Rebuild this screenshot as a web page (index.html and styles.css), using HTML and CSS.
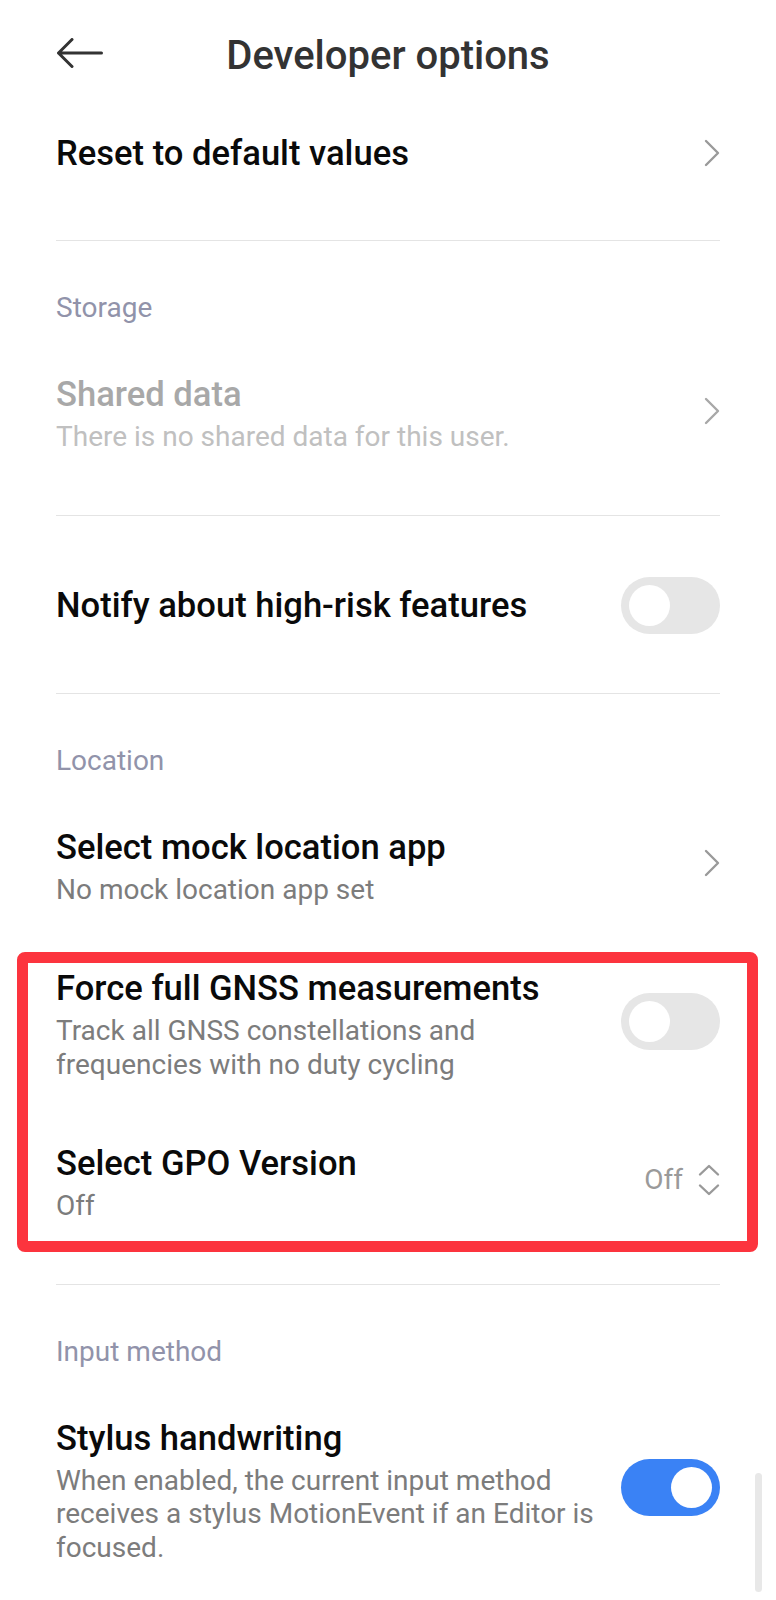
FILE: index.html
```html
<!DOCTYPE html>
<html lang="en">
<head>
<meta charset="utf-8">
<title>Developer options</title>
<link rel="stylesheet" href="styles.css">
</head>
<body>
<div class="screen">
  <header class="appbar">
    <button class="back" aria-label="Back">
      <svg width="48" height="30" viewBox="0 0 48 30" fill="none" stroke="#333" stroke-width="3" stroke-linecap="round" stroke-linejoin="round"><path d="M2.5 15H45.5M16 1.5L2.5 15L16 28.5"/></svg>
    </button>
    <h1 class="appbar-title">Developer options</h1>
    <span></span>
  </header>

  <main class="list">
    <div class="row">
      <div class="text"><div class="title">Reset to default values</div></div>
      <svg class="chevron" width="16" height="28" viewBox="0 0 16 28" fill="none" stroke="#9a9a9a" stroke-width="2.4" stroke-linecap="round" stroke-linejoin="round"><path d="M2 2L14 14L2 26"/></svg>
    </div>
    <hr class="divider">

    <div class="category">Storage</div>
    <div class="row disabled">
      <div class="text">
        <div class="title">Shared data</div>
        <div class="summary">There is no shared data for this user.</div>
      </div>
      <svg class="chevron" width="16" height="28" viewBox="0 0 16 28" fill="none" stroke="#a8a8a8" stroke-width="2.4" stroke-linecap="round" stroke-linejoin="round"><path d="M2 2L14 14L2 26"/></svg>
    </div>
    <hr class="divider">

    <div class="row row-switch">
      <div class="text"><div class="title">Notify about high-risk features</div></div>
      <span class="switch"><span class="knob"></span></span>
    </div>
    <hr class="divider">

    <div class="category">Location</div>
    <div class="row">
      <div class="text">
        <div class="title">Select mock location app</div>
        <div class="summary">No mock location app set</div>
      </div>
      <svg class="chevron" width="16" height="28" viewBox="0 0 16 28" fill="none" stroke="#9a9a9a" stroke-width="2.4" stroke-linecap="round" stroke-linejoin="round"><path d="M2 2L14 14L2 26"/></svg>
    </div>

    <div class="highlight">
      <div class="row">
        <div class="text">
          <div class="title">Force full GNSS measurements</div>
          <div class="summary">Track all GNSS constellations and frequencies with no duty cycling</div>
        </div>
        <span class="switch"><span class="knob"></span></span>
      </div>
      <div class="row">
        <div class="text">
          <div class="title">Select GPO Version</div>
          <div class="summary">Off</div>
        </div>
        <div class="value">
          <span class="value-text">Off</span>
          <svg width="22" height="32" viewBox="0 0 22 32" fill="none" stroke="#999" stroke-width="2.4" stroke-linecap="round" stroke-linejoin="round"><path d="M2 10.5L11 2L20 10.5M2 21.5L11 30L20 21.5"/></svg>
        </div>
      </div>
    </div>
    <hr class="divider">

    <div class="category">Input method</div>
    <div class="row">
      <div class="text">
        <div class="title">Stylus handwriting</div>
        <div class="summary">When enabled, the current input method receives a stylus MotionEvent if an Editor is focused.</div>
      </div>
      <span class="switch on"><span class="knob"></span></span>
    </div>
  </main>

  <div class="scrollbar"></div>
</div>
</body>
</html>
```

FILE: styles.css
```css
* { box-sizing: border-box; }

html, body {
  margin: 0;
  padding: 0;
  background: #ffffff;
}

body {
  font-family: Roboto, "Noto Sans", "Liberation Sans", sans-serif;
  color: #000;
  width: 776px;
  height: 1600px;
  overflow: hidden;
}

.screen {
  position: relative;
  width: 776px;
  height: 1600px;
}

.appbar {
  display: grid;
  grid-template-columns: 1fr auto 1fr;
  align-items: start;
  height: 99px;
  padding: 33px 56px 0;
}

.back {
  justify-self: start;
  margin: 5px 0 0 0;
  padding: 0;
  border: 0;
  background: none;
  display: block;
  line-height: 0;
}

.appbar-title {
  margin: 0;
  font-size: 40px;
  font-weight: 500;
  line-height: 46px;
  color: #333;
  white-space: nowrap;
}

.list {
  padding: 0 56px;
}

.row {
  display: flex;
  align-items: center;
  column-gap: 16px;
  padding: 28px 0;
}

.row-switch {
  padding: 26px 0;
}

.text {
  flex: 1;
  min-width: 0;
}

.title {
  font-size: 34.6px;
  font-weight: 500;
  line-height: 52px;
  color: #0a0a0a;
}

.summary {
  font-size: 28px;
  font-weight: 400;
  line-height: 33.5px;
  color: #7c7c7c;
}

.disabled .title { color: #a8a8a8; }
.disabled .summary { color: #c0c0c0; }

.chevron { flex-shrink: 0; }

.divider {
  border: 0;
  height: 1px;
  background: #e4e4e4;
  margin: 33px 0 35px;
}

.category {
  font-size: 28px;
  line-height: 64px;
  color: #9193aa;
}

.switch {
  flex-shrink: 0;
  display: flex;
  width: 99px;
  height: 57px;
  padding: 8px;
  border-radius: 29px;
  background: #e6e6e6;
}

.switch.on {
  justify-content: flex-end;
  background: #3a82f5;
}

.knob {
  width: 41px;
  height: 41px;
  border-radius: 50%;
  background: #fff;
}

.value {
  flex-shrink: 0;
  display: flex;
  align-items: center;
  gap: 15px;
}

.value-text {
  font-size: 28px;
  line-height: 34px;
  color: #9a9a9a;
}

.highlight {
  position: relative;
}

.highlight::after {
  content: "";
  position: absolute;
  left: -39px;
  right: -38px;
  top: 18px;
  bottom: -1px;
  border: 11px solid #fc343e;
  border-radius: 8px;
  pointer-events: none;
}

.scrollbar {
  position: absolute;
  left: 755px;
  top: 1473px;
  width: 7px;
  height: 119px;
  border-radius: 4px;
  background: #e8e8e8;
}
```
